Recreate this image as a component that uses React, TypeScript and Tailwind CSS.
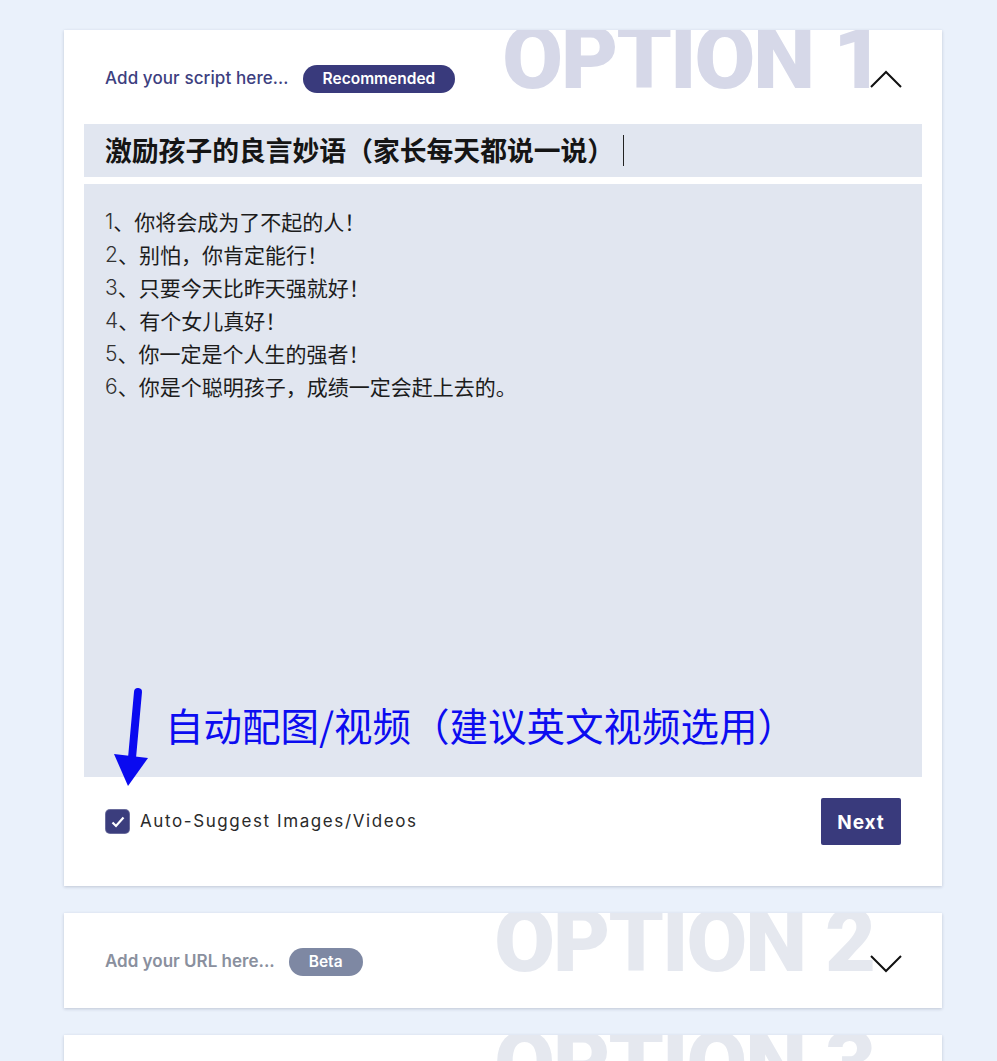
import React from "react";

const ui = { fontFamily: "Inter, 'Noto Sans CJK SC', sans-serif" };
const cjk = { fontFamily: "'Noto Sans CJK SC', 'Noto Sans', sans-serif" };
const big = { fontFamily: "Roboto, 'Liberation Sans', sans-serif" };

function Chevron({ up }: { up: boolean }) {
  return (
    <svg width="32" height="18" viewBox="0 0 32 18" className="block">
      <polyline
        points={up ? "1,17 16,2 31,17" : "1,1 16,16 31,1"}
        fill="none"
        stroke="#111"
        strokeWidth="2"
      />
    </svg>
  );
}

const lines = [
  ["1", "你将会成为了不起的人！"],
  ["2", "别怕，你肯定能行！"],
  ["3", "只要今天比昨天强就好！"],
  ["4", "有个女儿真好！"],
  ["5", "你一定是个人生的强者！"],
  ["6", "你是个聪明孩子，成绩一定会赶上去的。"],
];

export default function App() {
  return (
    <div className="h-[1061px] overflow-hidden bg-[#eaf1fb] pt-[30px]" style={ui}>
      <div className="ml-[64px] flex w-[878px] flex-col gap-[27px]">
        {/* Card 1 */}
        <div className="relative overflow-hidden bg-white shadow-[0_1px_3px_rgba(40,50,80,0.22)]">
          <div
            className="pointer-events-none absolute right-[60px] top-[-16px] select-none text-[88px] font-black leading-none tracking-[-2px] text-[#d6d8e8]"
            style={big}
          >
            OPTION 1
          </div>
          <div className="relative flex h-[94px] items-center pl-[41px] pr-[40px] pt-[4px]">
            <span className="text-[17px] font-medium tracking-[0.1px] text-[#3d4080]">Add your script here...</span>
            <span className="ml-[14px] flex h-[28px] items-center rounded-full bg-[#393a7c] px-[20px] text-[15.5px] font-semibold text-white">
              Recommended
            </span>
            <div className="ml-auto">
              <Chevron up />
            </div>
          </div>
          <div className="px-[20px]">
            <div className="flex h-[53px] items-center bg-[#e1e6f0] px-[21px]">
              <span className="text-[26.8px] font-bold text-[#151515]" style={cjk}>
                激励孩子的良言妙语（家长每天都说一说）
              </span>
              <span className="ml-[9px] h-[31px] w-px bg-[#222]" />
            </div>
            <div className="relative mt-[7px] h-[593px] bg-[#e1e6f0] px-[21px] pt-[21px]">
              {lines.map(([n, t]) => (
                <div key={n} className="flex h-[33px] items-center text-[21px] text-[#1c1c1c]">
                  <span className="font-light text-[#333]" style={ui}>{n}</span>
                  <span style={cjk}>、{t}</span>
                </div>
              ))}
              <div
                className="absolute left-[81px] top-[521px] text-[38.5px] leading-none text-[#0c0cf0]"
                style={cjk}
              >
                自动配图/视频（建议英文视频选用）
              </div>
            </div>
          </div>
          <div className="h-[109px] pl-[42px] pr-[41px] pt-[21px]">
            <div className="flex h-[47px] items-center justify-between">
              <label className="flex items-center">
                <span className="flex h-[23px] w-[23px] items-center justify-center rounded-[4px] bg-[#3b3d7d] shadow-[0_0_0_1px_#6a6c9c]">
                  <svg width="14" height="12" viewBox="0 0 14 12">
                    <polyline points="1.5,6.5 5,10 12.5,1.5" fill="none" stroke="#fff" strokeWidth="2.2" />
                  </svg>
                </span>
                <span className="ml-[11px] text-[17px] tracking-[1.6px] text-[#2a2a2a]">
                  Auto-Suggest Images/Videos
                </span>
              </label>
              <button className="flex h-[47px] w-[80px] items-center justify-center rounded-[2px] bg-[#393a7c] pt-[4px] text-[19px] font-bold tracking-[1px] text-white">
                Next
              </button>
            </div>
          </div>
          {/* annotation arrow overlay */}
          <svg
            className="pointer-events-none absolute left-[46px] top-[656px]"
            width="40"
            height="104"
            viewBox="0 0 40 104"
          >
            <line x1="28" y1="6" x2="22" y2="72" stroke="#0a0af0" strokeWidth="8" strokeLinecap="round" />
            <polygon points="4,68 38,72 18,100" fill="#0a0af0" />
          </svg>
        </div>

        {/* Card 2 */}
        <div className="relative h-[95px] shrink-0 overflow-hidden bg-white shadow-[0_1px_3px_rgba(40,50,80,0.22)]">
          <div
            className="pointer-events-none absolute right-[68px] top-[-16px] select-none text-[88px] font-black leading-none tracking-[-2px] text-[#e5e8ef]"
            style={big}
          >
            OPTION 2
          </div>
          <div className="relative flex h-[95px] items-center pl-[41px] pr-[40px] pt-[3px]">
            <span className="text-[17px] font-semibold text-[#8a909e]">Add your URL here...</span>
            <span className="ml-[14px] flex h-[28px] items-center rounded-full bg-[#7e88a3] px-[20px] text-[15.5px] font-semibold text-white">
              Beta
            </span>
            <div className="ml-auto mt-[4px]">
              <Chevron up={false} />
            </div>
          </div>
        </div>

        {/* Card 3 */}
        <div className="relative h-[95px] shrink-0 overflow-hidden bg-white shadow-[0_1px_3px_rgba(40,50,80,0.22)]">
          <div
            className="pointer-events-none absolute right-[68px] top-[-16px] select-none text-[88px] font-black leading-none tracking-[-2px] text-[#e5e8ef]"
            style={big}
          >
            OPTION 3
          </div>
        </div>
      </div>
    </div>
  );
}
